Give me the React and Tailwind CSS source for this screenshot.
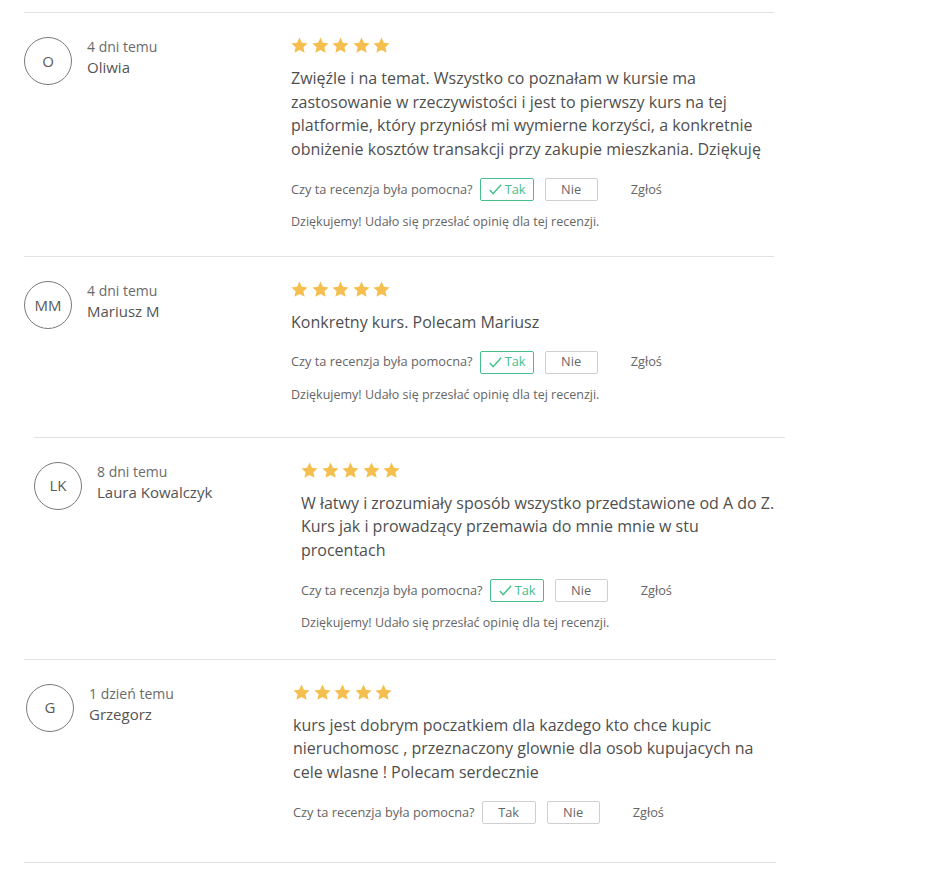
const reviews = [
  {
    initials: "O",
    date: "4 dni temu",
    name: "Oliwia",
    text: "Zwięźle i na temat. Wszystko co poznałam w kursie ma zastosowanie w rzeczywistości i jest to pierwszy kurs na tej platformie, który przyniósł mi wymierne korzyści, a konkretnie obniżenie kosztów transakcji przy zakupie mieszkania. Dziękuję",
    voted: true,
    wrap: "w-[750px]",
    pb: "pb-[26px]",
  },
  {
    initials: "MM",
    date: "4 dni temu",
    name: "Mariusz M",
    text: "Konkretny kurs. Polecam Mariusz",
    voted: true,
    wrap: "w-[750px]",
    pb: "pb-[34px]",
  },
  {
    initials: "LK",
    date: "8 dni temu",
    name: "Laura Kowalczyk",
    text: "W łatwy i zrozumiały sposób wszystko przedstawione od A do Z. Kurs jak i prowadzący przemawia do mnie mnie w stu procentach",
    voted: true,
    wrap: "w-[751px] ml-[10px]",
    pb: "pb-[28px]",
  },
  {
    initials: "G",
    date: "1 dzień temu",
    name: "Grzegorz",
    text: "kurs jest dobrym poczatkiem dla kazdego kto chce kupic nieruchomosc , przeznaczony glownie dla osob kupujacych na cele wlasne ! Polecam serdecznie",
    voted: false,
    wrap: "w-[752px] pl-[2px]",
    pb: "pb-[38px]",
  },
];

function Star() {
  return (
    <svg width="17" height="17" viewBox="0 0 24 24" className="fill-[#f5bf4f]">
      <path d="M12 0.8l3.4 7.3 8 .9-5.9 5.5 1.7 7.9L12 18.4l-7.2 4 1.7-7.9L.6 9l8-.9z" />
    </svg>
  );
}

function Review({ r }) {
  return (
    <div className={`${r.wrap} border-t border-[#e2e2e2] pt-[24px] ${r.pb} flex`}>
      <div className="w-[267px] shrink-0 flex gap-[15px]">
        <div className="w-[48px] h-[48px] rounded-full border border-[#7b7b7b] flex items-center justify-center text-[15px] text-[#5a5a5a]">
          {r.initials}
        </div>
        <div>
          <div className="text-[14px] leading-[20px] text-[#6b6b6b]">{r.date}</div>
          <div className="text-[15px] leading-[21px] text-[#555]">{r.name}</div>
        </div>
      </div>
      <div className="flex-1">
        <div className="flex gap-[3.5px] h-[17px]">
          {[0, 1, 2, 3, 4].map((i) => (
            <Star key={i} />
          ))}
        </div>
        <p className="mt-[13px] text-[16px] leading-[23.7px] text-[#4f4f4f]">{r.text}</p>
        <div className="mt-[16px] flex items-center text-[12.8px] text-[#666]">
          <span>Czy ta recenzja była pomocna?</span>
          <button
            className={`ml-[7px] w-[54px] h-[23px] rounded-[2px] border flex items-center justify-center gap-[2px] ${
              r.voted ? "border-[#45c08c] text-[#45c08c]" : "border-[#cfcfcf] text-[#666]"
            }`}
          >
            {r.voted && (
              <svg width="15" height="15" viewBox="0 0 16 16" fill="none" stroke="#45c08c" strokeWidth="1.6">
                <path d="M2 8.5l3.5 4L14 3" />
              </svg>
            )}
            Tak
          </button>
          <button className="ml-[11px] w-[53px] h-[23px] rounded-[2px] border border-[#cfcfcf] text-[#666]">
            Nie
          </button>
          <span className="ml-[33px]">Zgłoś</span>
        </div>
        {r.voted && (
          <div className="mt-[13px] text-[12.5px] leading-[16px] text-[#666]">
            Dziękujemy! Udało się przesłać opinię dla tej recenzji.
          </div>
        )}
      </div>
    </div>
  );
}

export default function App() {
  return (
    <div className="min-h-screen bg-white font-['Open_Sans',sans-serif]">
      <div className="pl-[24px] pt-[12px]">
        {reviews.map((r, i) => (
          <Review key={i} r={r} />
        ))}
        <div className="w-[752px] border-t border-[#e2e2e2]" />
      </div>
    </div>
  );
}
